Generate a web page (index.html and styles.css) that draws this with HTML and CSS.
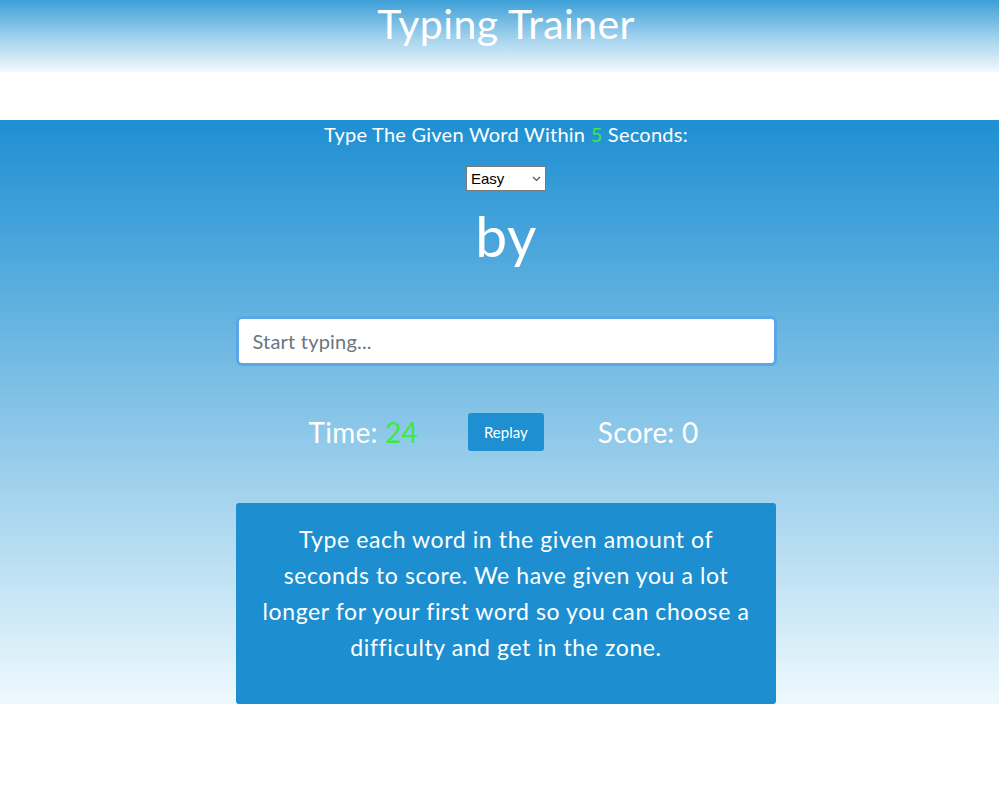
FILE: index.html
```html
<!DOCTYPE html>
<html lang="en">
<head>
<meta charset="utf-8">
<title>Typing Trainer</title>
<link rel="stylesheet" href="styles.css">
</head>
<body>
<header class="topbar">
  <h1 class="title">Typing Trainer</h1>
</header>
<main class="game">
  <p class="lead">Type The Given Word Within <span class="green">5</span> Seconds:</p>
  <div class="select-wrap">
    <select class="difficulty">
      <option>Easy</option>
      <option>Medium</option>
      <option>Hard</option>
    </select>
    <svg class="chevron" width="9" height="6" viewBox="0 0 9 6"><path d="M1 1 L4.5 4.5 L8 1" fill="none" stroke="#555" stroke-width="1.2"/></svg>
  </div>
  <h2 class="word">by</h2>
  <input class="word-input" type="text" placeholder="Start typing..." autofocus>
  <div class="stats">
    <h3 class="stat">Time: <span class="green">24</span></h3>
    <button class="replay">Replay</button>
    <h3 class="stat score">Score: 0</h3>
  </div>
  <div class="info">
    <p>Type each word in the given amount of seconds to score. We have given you a lot longer for your first word so you can choose a difficulty and get in the zone.</p>
  </div>
</main>
</body>
</html>
```

FILE: styles.css
```css
* { box-sizing: border-box; }
html, body { margin: 0; padding: 0; }
body {
  font-family: "Lato", "Open Sans", sans-serif;
  color: #fff;
  background: #fff;
  width: 999px;
}
.topbar {
  height: 72px;
  padding-left: 13px;
  background: linear-gradient(to bottom, #3d9fd7 0%, #a6d4ee 55%, #f2f9fd 100%);
  display: flex;
  justify-content: center;
  margin-bottom: 48px;
}
.title {
  margin: 0;
  font-weight: 400;
  font-size: 41px;
  letter-spacing: 0.4px;
  line-height: 48px;
  color: #fff;
}
.game {
  display: flex;
  flex-direction: column;
  align-items: center;
  padding-left: 13px;
  background: linear-gradient(to bottom, #1e8fd2 0%, #eef9fd 100%);
  height: 584px;
}
.lead {
  margin: 0;
  font-size: 20px;
  letter-spacing: 0.25px;
  line-height: 28px;
}
.green { color: #3dea3d; }
.select-wrap {
  position: relative;
  margin-top: 18px;
  width: 80px;
  height: 25px;
}
.difficulty {
  appearance: none;
  -webkit-appearance: none;
  display: block;
  width: 80px;
  height: 25px;
  padding: 0 0 0 4px;
  font-family: "Liberation Sans", sans-serif;
  font-size: 15px;
  background: #fff;
  color: #000;
  border: 1px solid #7a7a7a;
  border-radius: 0;
}
.chevron {
  position: absolute;
  right: 5px;
  top: 10px;
  pointer-events: none;
}
.word {
  margin: 4px 0 0;
  font-weight: 400;
  font-size: 57px;
  letter-spacing: 0.5px;
  line-height: 80px;
}
.word-input {
  margin-top: 41px;
  width: 541px;
  height: 50px;
  border: 3px solid #5aa7e8;
  border-radius: 6px;
  padding: 0 14px;
  font-family: "Lato", sans-serif;
  font-size: 20px;
  letter-spacing: 0.2px;
  color: #495057;
  outline: none;
  background: #fff;
}
.word-input::placeholder { color: #6c757d; }
.stats {
  margin-top: 47px;
  margin-right: 5px;
  display: flex;
  align-items: center;
}
.stat {
  margin: 0;
  font-weight: 400;
  font-size: 28px;
  letter-spacing: 0.2px;
  line-height: 34px;
}
.replay {
  width: 76px;
  height: 38px;
  margin: 0 54px 0 50px;
  background: #1e8fd0;
  color: #fff;
  border: none;
  border-radius: 3px;
  font-family: "Lato", sans-serif;
  font-size: 15px;
}
.info {
  margin-top: 52px;
  width: 540px;
  height: 202px;
  background: #1d8fd0;
  border-radius: 3px;
  padding: 18px 20px;
  text-align: center;
}
.info p {
  margin: 0;
  font-size: 23px;
  letter-spacing: 0.6px;
  line-height: 36px;
}
```
